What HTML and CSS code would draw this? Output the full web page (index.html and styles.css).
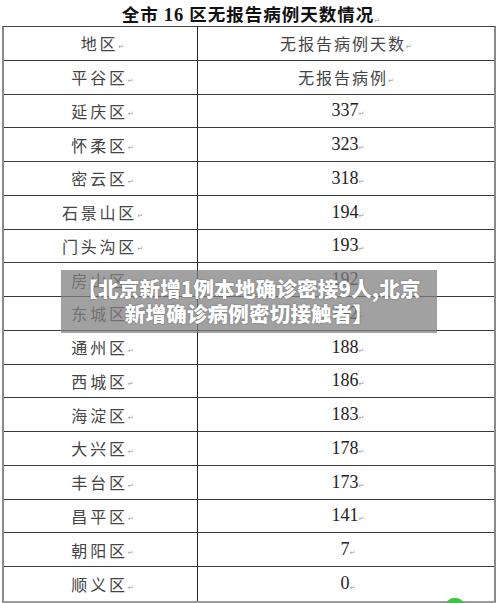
FILE: index.html
```html
<!DOCTYPE html>
<html lang="zh">
<head>
<meta charset="utf-8">
<title>全市16区无报告病例天数情况</title>
<link rel="stylesheet" href="styles.css">
</head>
<body>
<div class="page">
  <h1 class="title">全市 <span class="num">16</span> 区无报告病例天数情况<span class="rt">↵</span></h1>
  <div class="sheet">
    <div class="cell name">地区<span class="rt">↵</span></div><div class="cell val cjk">无报告病例天数<span class="rt">↵</span></div>
    <div class="cell name">平谷区<span class="rt">↵</span></div><div class="cell val cjk">无报告病例<span class="rt">↵</span></div>
    <div class="cell name">延庆区<span class="rt">↵</span></div><div class="cell val">337<span class="rt">↵</span></div>
    <div class="cell name">怀柔区<span class="rt">↵</span></div><div class="cell val">323<span class="rt">↵</span></div>
    <div class="cell name">密云区<span class="rt">↵</span></div><div class="cell val">318<span class="rt">↵</span></div>
    <div class="cell name">石景山区<span class="rt">↵</span></div><div class="cell val">194<span class="rt">↵</span></div>
    <div class="cell name">门头沟区<span class="rt">↵</span></div><div class="cell val">193<span class="rt">↵</span></div>
    <div class="cell name">房山区<span class="rt">↵</span></div><div class="cell val">192<span class="rt">↵</span></div>
    <div class="cell name">东城区<span class="rt">↵</span></div><div class="cell val">192<span class="rt">↵</span></div>
    <div class="cell name">通州区<span class="rt">↵</span></div><div class="cell val">188<span class="rt">↵</span></div>
    <div class="cell name">西城区<span class="rt">↵</span></div><div class="cell val">186<span class="rt">↵</span></div>
    <div class="cell name">海淀区<span class="rt">↵</span></div><div class="cell val">183<span class="rt">↵</span></div>
    <div class="cell name">大兴区<span class="rt">↵</span></div><div class="cell val">178<span class="rt">↵</span></div>
    <div class="cell name">丰台区<span class="rt">↵</span></div><div class="cell val">173<span class="rt">↵</span></div>
    <div class="cell name">昌平区<span class="rt">↵</span></div><div class="cell val">141<span class="rt">↵</span></div>
    <div class="cell name">朝阳区<span class="rt">↵</span></div><div class="cell val">7<span class="rt">↵</span></div>
    <div class="cell name last">顺义区<span class="rt">↵</span></div><div class="cell val last">0<span class="rt">↵</span></div>
  </div>
  <div class="caption">【北京新增1例本地确诊密接9人,北京<br>新增确诊病例密切接触者】</div>
  <span class="blob"></span>
</div>
</body>
</html>
```
FILE: styles.css
```css
html, body {
  margin: 0;
  padding: 0;
  background: #ffffff;
}
.page {
  position: relative;
  width: 500px;
  height: 603px;
  overflow: hidden;
  font-family: "Noto Sans CJK SC", "Liberation Serif", serif;
}
.title {
  margin: 0;
  height: 26px;
  line-height: 27px;
  text-align: center;
  font-size: 17.5px;
  font-weight: 700;
  color: #111;
  letter-spacing: 1px;
  padding-left: 2px;
}
.title .num {
  font-family: "Liberation Serif", serif;
  font-weight: 700;
  font-size: 18.5px;
}
.sheet {
  margin-left: 2px;
  width: 494px;
  display: grid;
  grid-template-columns: 194px 1fr;
  grid-auto-rows: 33.75px;
  border-top: 1px solid #444;
  border-left: 2px solid #8a8a8a;
  border-right: 2px solid #8a8a8a;
  border-bottom: 2px solid #9a9a9a;
  box-sizing: border-box;
}
.cell {
  display: flex;
  align-items: center;
  justify-content: center;
  border-bottom: 1px solid #3a3a3a;
  color: #444;
  box-sizing: border-box;
}
.cell.last {
  border-bottom: none;
}
.name {
  border-right: 1px solid #222;
  font-size: 16px;
  letter-spacing: 2.8px;
  padding-left: 4px;
}
.val {
  font-family: "Liberation Serif", serif;
  font-size: 18px;
  color: #222;
  padding-left: 4px;
}
.val.cjk {
  font-family: "Noto Sans CJK SC", sans-serif;
  font-size: 16px;
  letter-spacing: 2px;
  color: #444;
  padding-left: 0;
}
.rt {
  font-family: "DejaVu Sans", sans-serif;
  font-size: 7px;
  color: #999;
  letter-spacing: 0;
  align-self: flex-end;
  margin-bottom: 9px;
  margin-left: 0;
}
.title .rt {
  font-weight: 400;
  vertical-align: -2px;
}
.caption {
  position: absolute;
  left: 61px;
  top: 270px;
  width: 376px;
  height: 63px;
  box-sizing: border-box;
  padding-top: 6px;
  background: rgba(128, 128, 128, 0.74);
  color: #ffffff;
  font-family: "Noto Sans CJK SC", sans-serif;
  font-weight: 900;
  font-size: 20.5px;
  line-height: 25px;
  text-align: center;
  text-shadow: 0 0 2px rgba(0, 0, 0, 0.35);
  letter-spacing: 0.2px;
  white-space: nowrap;
}
.blob {
  position: absolute;
  left: 447px;
  top: 598px;
  width: 16px;
  height: 10px;
  border-radius: 50%;
  background: #3cc43c;
}
```
